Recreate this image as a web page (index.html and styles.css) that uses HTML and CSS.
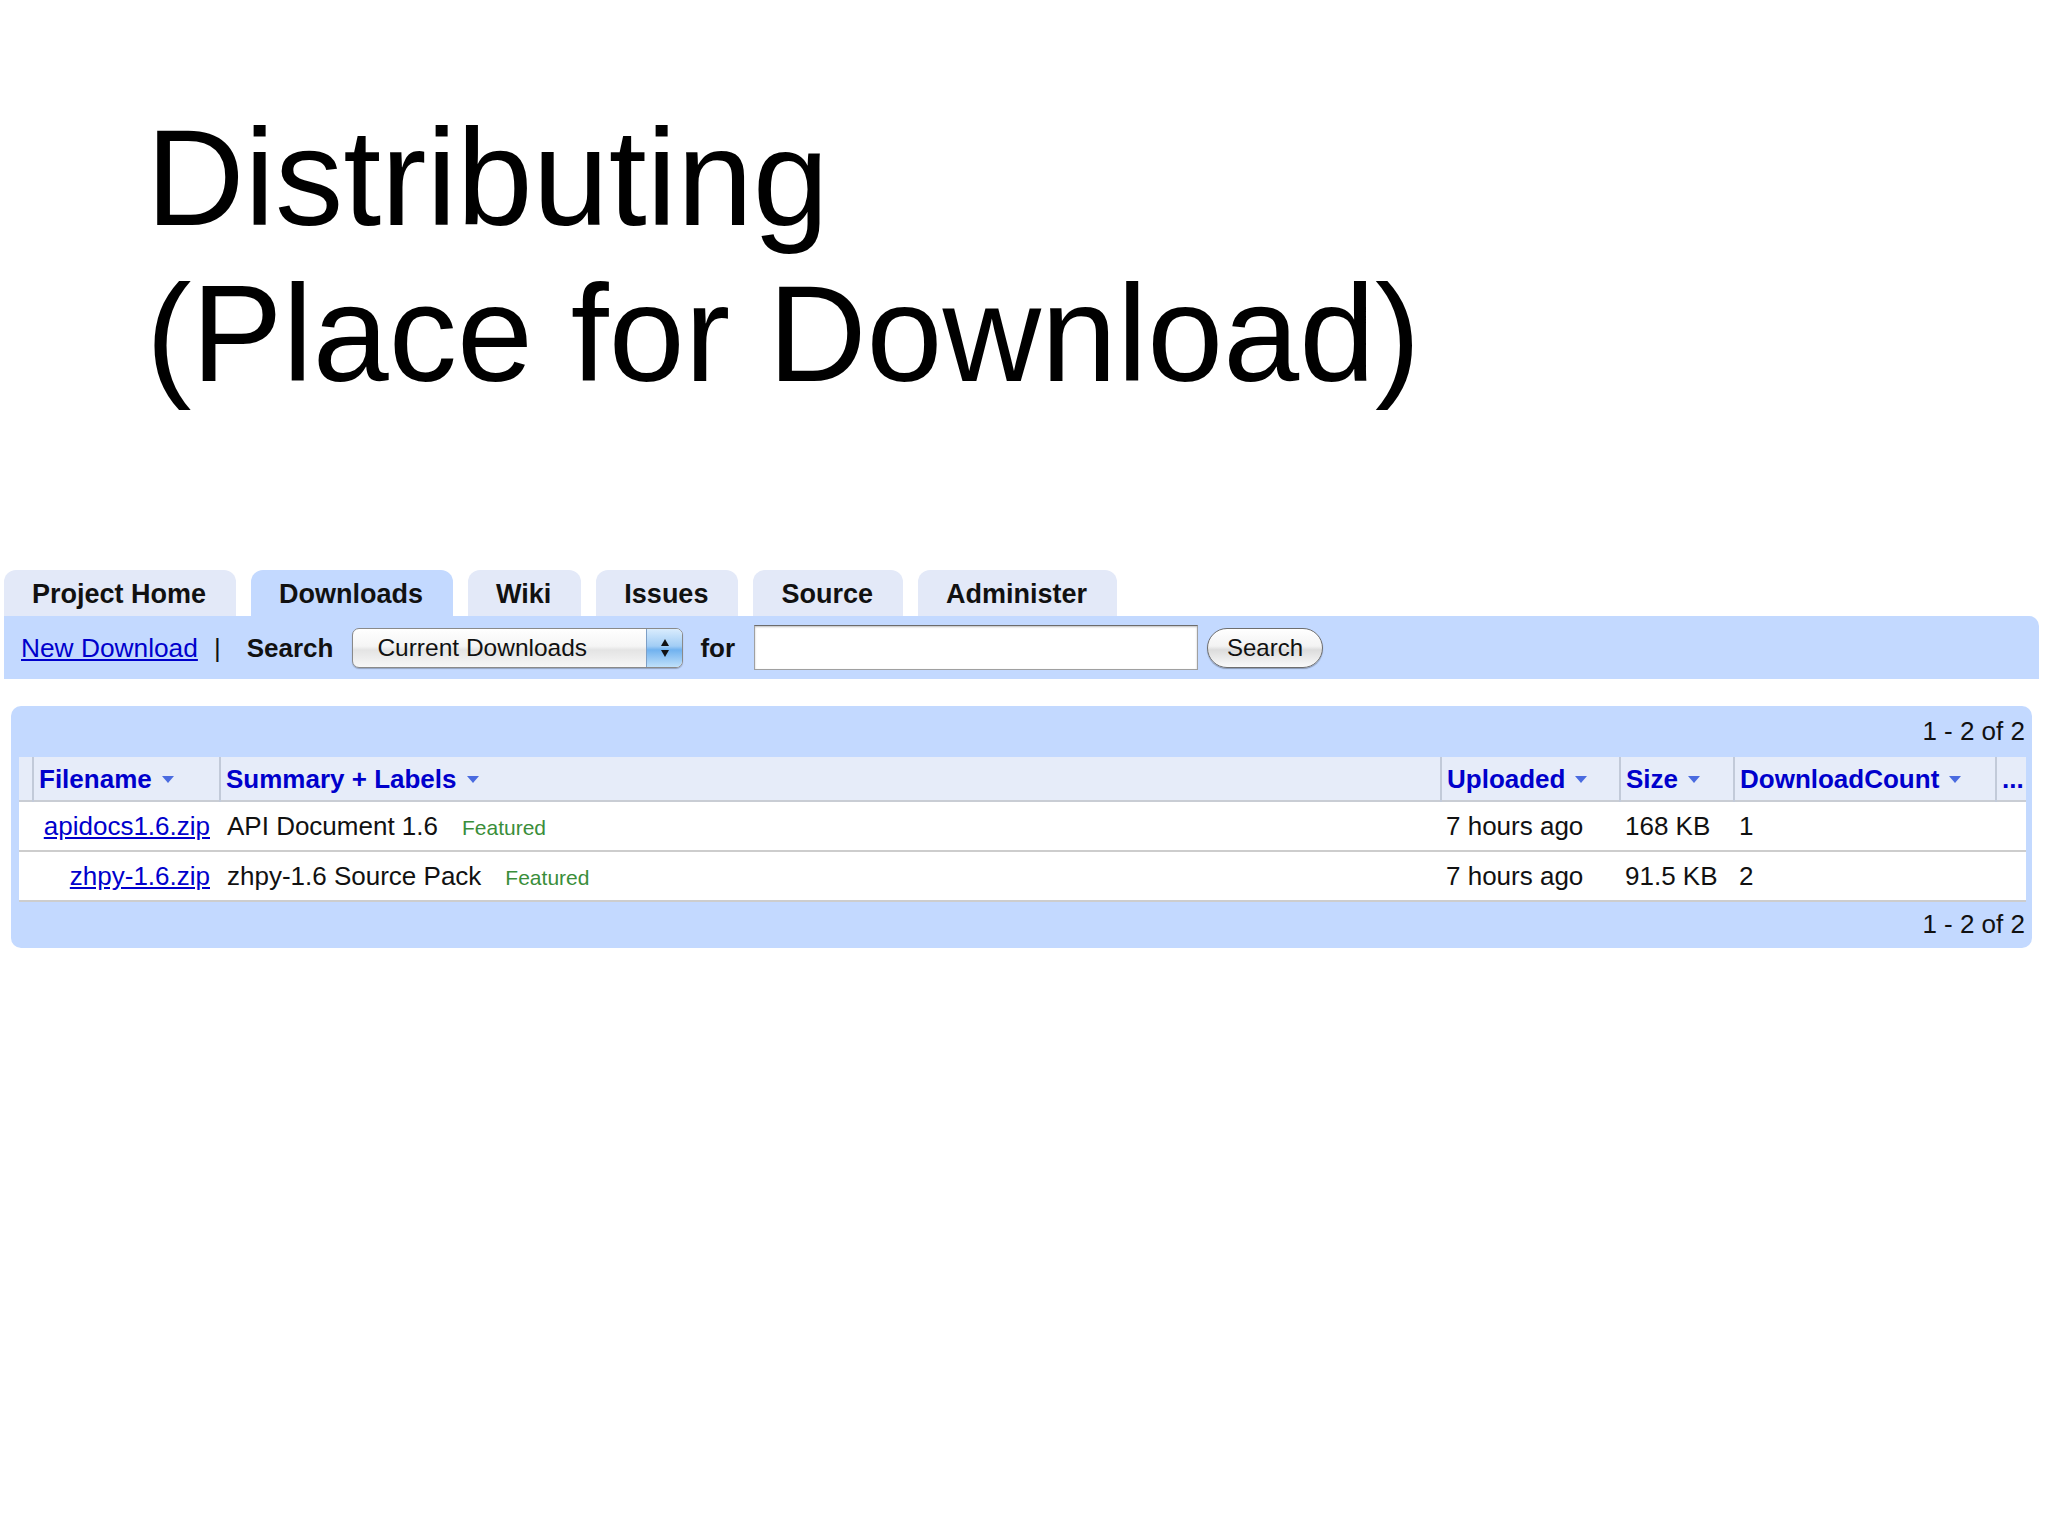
FILE: index.html
```html
<!DOCTYPE html>
<html lang="en">
<head>
<meta charset="utf-8">
<title>Distributing (Place for Download)</title>
<link rel="stylesheet" href="styles.css">
</head>
<body>
<h1 class="title">Distributing<br>(Place for Download)</h1>

<div class="gc">
  <ul class="tabs">
    <li class="tab">Project Home</li>
    <li class="tab active">Downloads</li>
    <li class="tab">Wiki</li>
    <li class="tab">Issues</li>
    <li class="tab">Source</li>
    <li class="tab">Administer</li>
  </ul>

  <div class="bar">
    <a class="link new-dl" href="#">New Download</a>
    <span class="sep">|</span>
    <span class="bar-label">Search</span>
    <div class="select">
      <span class="select-text">Current Downloads</span>
      <span class="select-arrows">
        <svg width="10" height="20" viewBox="0 0 10 20"><polygon points="1,8 5,1 9,8" fill="#111"/><polygon points="1,12 5,19 9,12" fill="#111"/></svg>
      </span>
    </div>
    <span class="bar-label for">for</span>
    <input class="search-input" type="text" aria-label="search text">
    <button class="search-btn" type="button">Search</button>
  </div>

  <div class="results">
    <div class="pagination">1 - 2 of 2</div>
    <table class="grid">
      <colgroup>
        <col class="w-c0">
        <col class="w-file">
        <col class="w-sum">
        <col class="w-up">
        <col class="w-size">
        <col class="w-count">
        <col class="w-more">
      </colgroup>
      <thead>
        <tr>
          <th class="c0"></th>
          <th>Filename<span class="arrow"></span></th>
          <th>Summary + Labels<span class="arrow"></span></th>
          <th>Uploaded<span class="arrow"></span></th>
          <th>Size<span class="arrow"></span></th>
          <th>DownloadCount<span class="arrow"></span></th>
          <th>...</th>
        </tr>
      </thead>
      <tbody>
        <tr>
          <td class="c0"></td>
          <td class="fname"><a class="link" href="#">apidocs1.6.zip</a></td>
          <td class="summary">API Document 1.6<span class="label">Featured</span></td>
          <td class="num">7 hours ago</td>
          <td class="num">168 KB</td>
          <td class="num">1</td>
          <td></td>
        </tr>
        <tr>
          <td class="c0"></td>
          <td class="fname"><a class="link" href="#">zhpy-1.6.zip</a></td>
          <td class="summary">zhpy-1.6 Source Pack<span class="label">Featured</span></td>
          <td class="num">7 hours ago</td>
          <td class="num">91.5 KB</td>
          <td class="num">2</td>
          <td></td>
        </tr>
      </tbody>
    </table>
    <div class="pagination bottom">1 - 2 of 2</div>
  </div>
</div>
</body>
</html>
```

FILE: styles.css
```css
body {
  margin: 0;
  background: #ffffff;
  color: #000000;
  font-family: "Liberation Sans", Arial, sans-serif;
}

.title {
  margin: 100px 0 0 146px;
  font-size: 136.5px;
  font-weight: normal;
  line-height: 156px;
}

.gc {
  margin: 158px 0 0 4px;
  width: 2035px;
}

/* tabs */
.tabs {
  display: flex;
  gap: 15px;
  list-style: none;
  margin: 0;
  padding: 0;
}

.tab {
  background: #e3e9f8;
  border-radius: 12px 12px 0 0;
  padding: 2px 30px 0 28px;
  height: 44px;
  line-height: 44px;
  font-size: 27px;
  font-weight: bold;
  color: #111111;
}

.tab.active {
  background: #c3d9ff;
}

/* search bar */
.bar {
  display: flex;
  align-items: center;
  height: 63px;
  padding-left: 17px;
  background: #c3d9ff;
  border-radius: 0 10px 0 0;
  line-height: 30px;
  font-size: 26px;
}

.link {
  color: #0000cc;
  text-decoration: underline;
}

.new-dl {
  font-size: 26.3px;
}

.sep {
  margin-left: 16px;
  color: #111111;
}

.bar-label {
  margin-left: 26px;
  font-weight: bold;
  color: #111111;
}

.bar-label.for {
  margin-left: 17px;
}

.select {
  display: flex;
  margin-left: 19px;
  width: 331px;
  height: 40px;
  box-sizing: border-box;
  border: 1px solid #8a8a8a;
  border-radius: 7px;
  overflow: hidden;
  background: linear-gradient(#ffffff 0%, #f5f5f5 45%, #e4e4e4 55%, #f7f7f7 100%);
  box-shadow: 0 1px 1px rgba(0, 0, 0, 0.25);
}

.select-text {
  flex: 1;
  padding-left: 24px;
  font-size: 24.5px;
  line-height: 38px;
  color: #111111;
}

.select-arrows {
  display: flex;
  align-items: center;
  justify-content: center;
  width: 35px;
  border-left: 1px solid #7d9fc6;
  background: linear-gradient(#d9ecfd 0%, #a2cdf5 45%, #71b2ef 55%, #bfe0fa 100%);
}

.search-input {
  margin-left: 19px;
  width: 444px;
  height: 45px;
  box-sizing: border-box;
  padding: 0;
  border: 1px solid #a0a0a0;
  border-top-color: #6c6c6c;
  background: #ffffff;
  box-shadow: inset 0 1px 2px rgba(0, 0, 0, 0.25);
}

.search-btn {
  margin-left: 9px;
  width: 116px;
  height: 40px;
  padding: 0;
  border: 1px solid #6e6e6e;
  border-radius: 20px;
  background: linear-gradient(#ffffff 0%, #f3f3f3 45%, #dcdcdc 55%, #fafafa 100%);
  box-shadow: 0 1px 1px rgba(0, 0, 0, 0.3);
  font-family: "Liberation Sans", Arial, sans-serif;
  font-size: 24px;
  color: #111111;
}

/* results box */
.results {
  margin: 27px 7px 0 7px;
  padding: 0 6px 0 8px;
  background: #c3d9ff;
  border-radius: 10px;
}

.pagination {
  height: 51px;
  line-height: 51px;
  padding-right: 1px;
  text-align: right;
  font-size: 26px;
  color: #111111;
}

.pagination.bottom {
  height: 46px;
  line-height: 44px;
}

.grid {
  width: 100%;
  table-layout: fixed;
  border-spacing: 0;
}

.w-c0 { width: 13px; }
.w-file { width: 187px; }
.w-sum { width: 1221px; }
.w-up { width: 179px; }
.w-size { width: 114px; }
.w-count { width: 262px; }
.w-more { width: 31px; }

.grid th {
  height: 45px;
  padding: 0 0 0 7px;
  background: #e6ecf9;
  text-align: left;
  white-space: nowrap;
  font-size: 26px;
  font-weight: bold;
  color: #0000cc;
  box-shadow: inset 0 -2px 0 #c9cdd4;
}

.grid th + th {
  box-shadow: inset 2px 0 0 #c2cad9, inset 0 -2px 0 #c9cdd4;
}

.grid th.c0 {
  padding: 0;
}

.arrow {
  display: inline-block;
  margin-left: 10px;
  width: 0;
  height: 0;
  border-left: 6px solid transparent;
  border-right: 6px solid transparent;
  border-top: 7px solid #4a6be0;
  vertical-align: middle;
  position: relative;
  top: -2px;
}

.grid td {
  height: 48px;
  padding: 0 0 0 6px;
  background: #ffffff;
  border-bottom: 2px solid #cdcdcd;
  white-space: nowrap;
  font-size: 26px;
  color: #111111;
}

.grid td.c0 {
  padding: 0;
}

.grid td.fname {
  padding: 0 9px 0 0;
  text-align: right;
}

.grid td.summary {
  padding-left: 8px;
}

.label {
  margin-left: 24px;
  font-size: 21px;
  color: #3a8e3a;
}
```
